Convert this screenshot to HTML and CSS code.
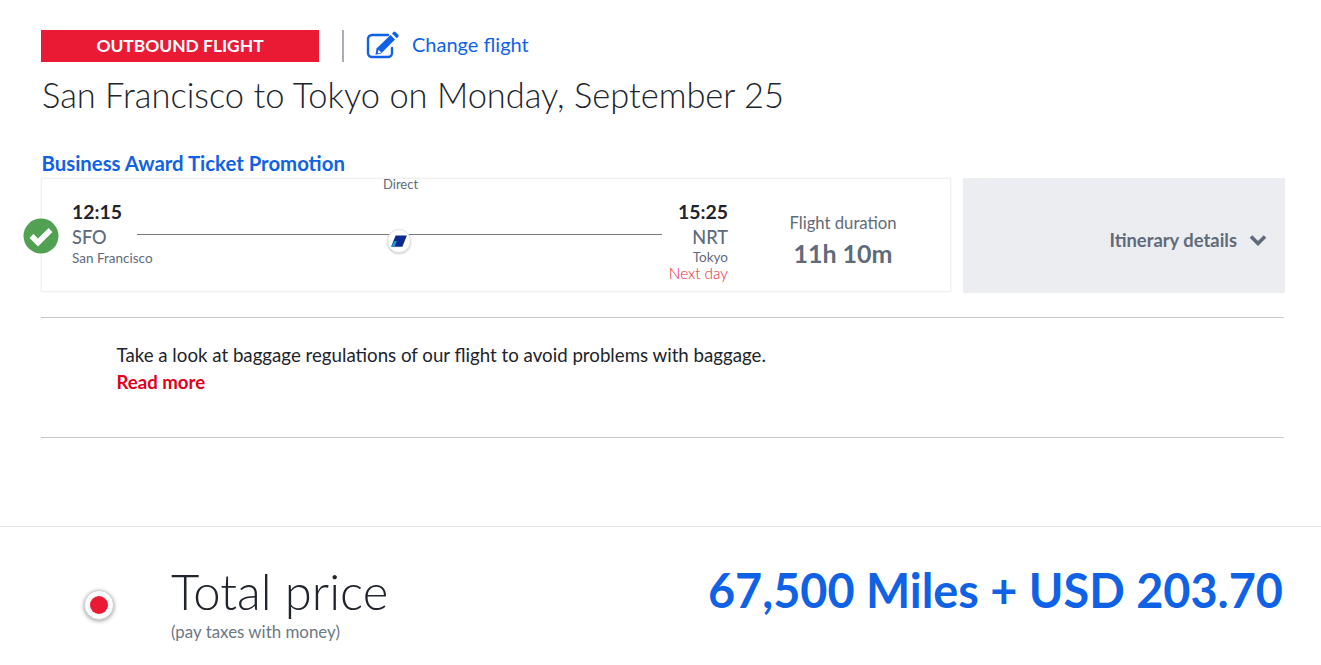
FILE: index.html
```html
<!DOCTYPE html>
<html lang="en">
<head>
<meta charset="utf-8">
<title>Outbound flight</title>
<link rel="stylesheet" href="styles.css">
</head>
<body>
<main class="page">
  <section class="flight">
    <div class="head">
      <div class="badge">OUTBOUND FLIGHT</div>
      <span class="divider"></span>
      <a class="change" href="#">
        <svg class="edit-icon" viewBox="0 0 34 28" aria-hidden="true">
          <path d="M22 4H6a4 4 0 0 0-4 4v14a4 4 0 0 0 4 4h16a4 4 0 0 0 4-4v-5" fill="none" stroke="#0f62e6" stroke-width="2.4" stroke-linecap="round"/>
          <path d="M10.5 17.5 24.5 4l4.5 4.500L15 22.500l-5.500 1.200z" fill="#0f62e6"/>
          <path d="M26 2.500l1.500-1.500a1.500 1.500 0 0 1 2 0l2.800 2.800a1.500 1.500 0 0 1 0 2L30.800 7.300z" fill="#0f62e6"/>
          <path d="M12.500 18.800l2.800 2.800-3.600.8z" fill="#fff"/>
        </svg>
        <span>Change flight</span>
      </a>
    </div>
    <h1 class="title">San Francisco to Tokyo on Monday, September 25</h1>
    <h2 class="promo">Business Award Ticket Promotion</h2>
    <div class="row">
      <div class="card">
        <svg class="check" viewBox="0 0 36 36" aria-hidden="true">
          <circle cx="18" cy="18" r="17.500" fill="#52a052"/>
          <path d="M8.500 18l6.500 6.500L27.500 12" fill="none" stroke="#fff" stroke-width="5.500"/>
        </svg>
        <div class="end">
          <div class="time">12:15</div>
          <div class="code">SFO</div>
          <div class="city">San Francisco</div>
        </div>
        <div class="route">
          <div class="direct">Direct</div>
          <div class="line"></div>
          <div class="carrier">
            <svg viewBox="0 0 16 12" aria-hidden="true"><path d="M5 1h10L11 11H1z" fill="#0b2a8f"/><path d="M1 11l3-5h2l-2 5z" fill="#1a9ad6"/></svg>
          </div>
        </div>
        <div class="end end-right">
          <div class="time">15:25</div>
          <div class="code">NRT</div>
          <div class="city city-tight">Tokyo</div>
          <div class="next">Next day</div>
        </div>
        <div class="duration">
          <div class="dur-label">Flight duration</div>
          <div class="dur-value">11h 10m</div>
        </div>
      </div>
      <a class="details" href="#">
        <span>Itinerary details</span>
        <svg class="chev" viewBox="0 0 18 12" aria-hidden="true"><path d="M2 2.500l7 7 7-7" fill="none" stroke="#5f6b7a" stroke-width="3.600"/></svg>
      </a>
    </div>
    <div class="baggage">
      <p class="bag-text">Take a look at baggage regulations of our flight to avoid problems with baggage.</p>
      <a class="read" href="#">Read more</a>
    </div>
  </section>
  <section class="total">
    <span class="radio"><span class="dot"></span></span>
    <div class="total-label">
      <div class="total-title">Total price</div>
      <div class="total-sub">(pay taxes with money)</div>
    </div>
    <div class="amount">67,500 Miles + USD 203.70</div>
  </section>
</main>
</body>
</html>
```
FILE: styles.css
```css
* { box-sizing: border-box; }
html, body { margin: 0; height: 100%; }
body {
  background: #fff;
  font-family: "Lato", "Open Sans", sans-serif;
  color: #20242c;
  overflow: hidden;
}
a { text-decoration: none; }
.page { width: 1321px; }
.flight { padding: 30px 37px 0 41px; }
.head { display: flex; align-items: center; height: 32px; }
.badge {
  width: 278px;
  height: 32px;
  background: #ea1a35;
  color: #fff;
  font-size: 17.400px;
  font-weight: 700;
  line-height: 32px;
  text-align: center;
}
.divider { width: 2px; height: 32px; background: #a8adb8; margin: 0 22px 0 23px; }
.change { display: flex; align-items: center; color: #0f62e6; font-size: 20px; gap: 12px; padding-bottom: 4px; }
.edit-icon { width: 34px; height: 28px; display: block; margin-top: 2px; }
.title {
  margin: 13px 0 0 1px;
  font-size: 34.450px;
  font-weight: 300;
  line-height: 40px;
  color: #20242c;
}
.promo {
  margin: 36px 0 0 0.500px;
  font-size: 20.350px;
  font-weight: 700;
  line-height: 24px;
  color: #0f62e6;
}
.row { display: flex; gap: 12px; margin-top: 3px; height: 115px; }
.card {
  position: relative;
  width: 910px;
  height: 114px;
  display: flex;
  background: #fff;
  border: 1px solid #f0f0f2;
  box-shadow: 0 0 2px rgba(0,0,0,.08);
  padding: 21px 0 0 30px;
}
.check { position: absolute; left: -19px; top: 39px; width: 36px; height: 36px; }
.end { width: 82px; }
.end-right { width: 66px; text-align: right; }
.time { font-size: 19.400px; font-weight: 700; line-height: 24px; color: #20242c; }
.code { font-size: 18.200px; font-weight: 500; line-height: 24px; margin-top: 1px; color: #5f6b7a; }
.city { font-size: 13.500px; line-height: 16px; margin-top: 1px; color: #5f6b7a; }
.city-tight { line-height: 14px; margin-top: 1px; }
.next { font-size: 15.300px; font-weight: 300; line-height: 14px; margin-top: 2px; color: #ea1a35; }
.route { position: relative; width: 525px; margin-left: -17px; }
.direct { position: absolute; left: 246px; top: -24px; font-size: 13px; line-height: 16px; color: #5f6b7a; }
.line { position: absolute; left: 0; right: 0; top: 34px; height: 1px; background: #77797d; }
.carrier {
  position: absolute;
  left: 250px;
  top: 29px;
  width: 24px;
  height: 24px;
  border-radius: 50%;
  background: #fff;
  border: 1px solid #e2e2e2;
  box-shadow: 0 1px 2px rgba(0,0,0,.2);
  display: flex;
  align-items: center;
  justify-content: center;
}
.carrier svg { width: 18px; height: 14px; display: block; }
.duration { width: 164px; margin-left: 33px; text-align: center; padding-top: 12px; color: #5f6b7a; }
.dur-label { font-size: 16.700px; line-height: 22px; }
.dur-value { font-size: 25px; font-weight: 700; line-height: 30px; margin-top: 4px; }
.details {
  flex: none;
  width: 322px;
  margin-right: -1px;
  background: #ecedf1;
  display: flex;
  align-items: center;
  justify-content: flex-end;
  gap: 12px;
  padding: 8px 18px 0 0;
  color: #5f6b7a;
  font-size: 18.400px;
  font-weight: 700;
}
.chev { width: 18px; height: 12px; display: block; }
.baggage {
  margin-top: 24px;
  height: 121px;
  border-top: 1px solid #c8c8c8;
  border-bottom: 1px solid #c8c8c8;
  padding: 25px 0 0 75.500px;
}
.bag-text { margin: 0; font-size: 18.700px; line-height: 24px; color: #20242c; }
.read { display: block; color: #e2001a; font-size: 18.600px; font-weight: 700; line-height: 24px; margin-top: 3px; }
.total {
  margin-top: 88px;
  border-top: 1px solid #e4e4e4;
  padding: 38px 38px 0 84px;
  display: flex;
}
.radio {
  width: 30px;
  height: 30px;
  margin-top: 25px;
  border-radius: 50%;
  background: #fff;
  border: 1px solid #d0d0d0;
  box-shadow: 0 1px 4px rgba(0,0,0,.4);
  display: flex;
  align-items: center;
  justify-content: center;
}
.dot { width: 18px; height: 18px; border-radius: 50%; background: #ea1a35; }
.total-label { margin-left: 57px; }
.total-title { font-size: 49px; font-weight: 300; line-height: 52px; color: #20242c; }
.total-sub { font-size: 16.900px; line-height: 20px; margin-top: 5px; color: #6d7887; }
.amount { margin-left: auto; margin-top: -1px; font-size: 46.800px; font-weight: 700; line-height: 52px; color: #0f62e6; }
```
